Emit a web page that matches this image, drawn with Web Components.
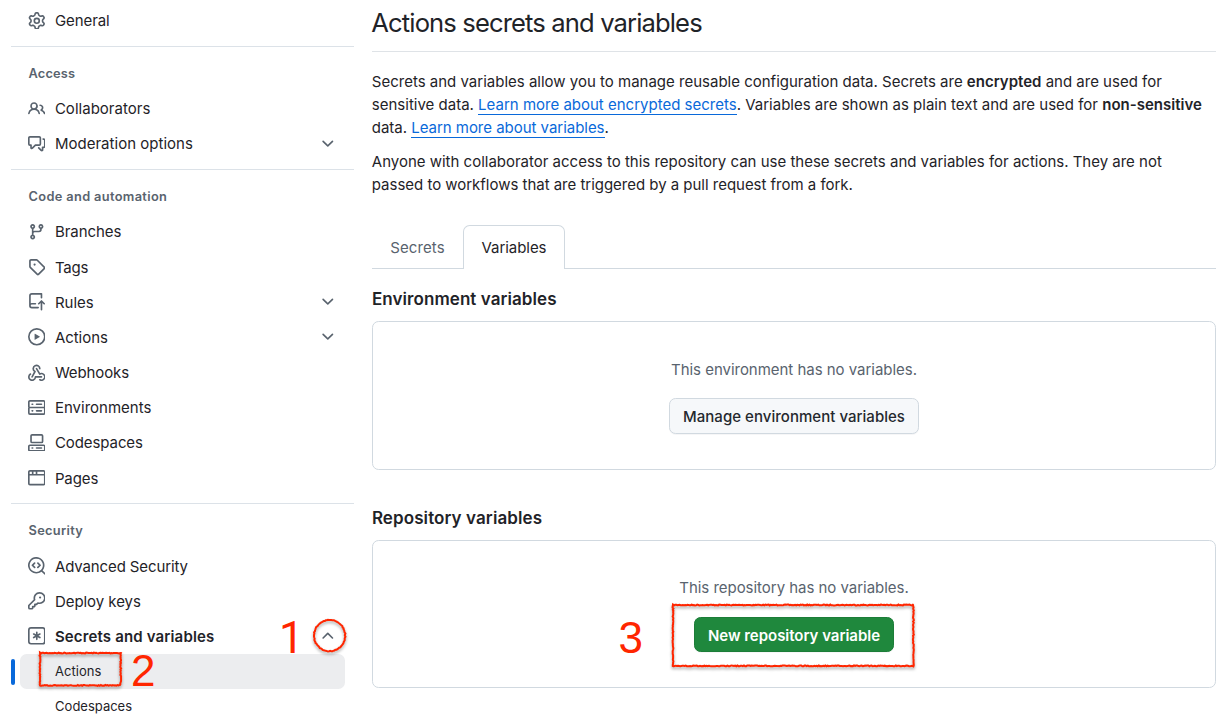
<!DOCTYPE html>
<html lang="en">
<head>
<meta charset="utf-8">
<title>Actions secrets and variables</title>
<style>
  body {
    margin: 0; width: 1230px; height: 723px; overflow: hidden; background: #fff; color: #1f2328;
    font-family: Inter, "Liberation Sans", sans-serif; font-size: 15px; line-height: 23px;
  }
  b { font-weight: 600; }
  a { color: #0969da; text-decoration: none; border-bottom: 1px solid #0969da; }
</style>
</head>
<body>
<settings-page>
  <side-nav slot="nav">
    <nav-item icon="gear" w="54.8">General</nav-item>
    <nav-divider></nav-divider>
    <nav-heading w="46.5">Access</nav-heading>
    <nav-item icon="people" w="95.5">Collaborators</nav-item>
    <nav-item icon="discussion" chevron="down" w="138">Moderation options</nav-item>
    <nav-divider></nav-divider>
    <nav-heading w="138.6">Code and automation</nav-heading>
    <nav-item icon="branch" w="66.5">Branches</nav-item>
    <nav-item icon="tag" w="33.2">Tags</nav-item>
    <nav-item icon="push" chevron="down" w="38.8">Rules</nav-item>
    <nav-item icon="play" chevron="down" w="53">Actions</nav-item>
    <nav-item icon="webhook" w="74.2">Webhooks</nav-item>
    <nav-item icon="server" w="96.5">Environments</nav-item>
    <nav-item icon="codespaces" w="88">Codespaces</nav-item>
    <nav-item icon="browser" w="43.3">Pages</nav-item>
    <nav-divider></nav-divider>
    <nav-heading w="54.5">Security</nav-heading>
    <nav-item icon="codescan" w="133">Advanced Security</nav-item>
    <nav-item icon="key" w="86">Deploy keys</nav-item>
    <nav-item icon="secret" chevron="up" strong w="159.5">Secrets and variables</nav-item>
    <nav-item sub current w="46.3">Actions</nav-item>
    <nav-item sub w="77">Codespaces</nav-item>
  </side-nav>

  <page-title w="330.5">Actions secrets and variables</page-title>
  <text-block>
    <fit-text w="790">Secrets and variables allow you to manage reusable configuration data. Secrets are <b>encrypted</b> and are used for</fit-text>
    <fit-text w="830">sensitive data. <a>Learn more about encrypted secrets</a>. Variables are shown as plain text and are used for <b>non-sensitive</b></fit-text>
    <fit-text w="237">data. <a>Learn more about variables</a>.</fit-text>
  </text-block>
  <text-block>
    <fit-text w="790">Anyone with collaborator access to this repository can use these secrets and variables for actions. They are not</fit-text>
    <fit-text w="481">passed to workflows that are triggered by a pull request from a fork.</fit-text>
  </text-block>
  <tab-strip>
    <tab-item w="54.5">Secrets</tab-item>
    <tab-item selected w="65">Variables</tab-item>
  </tab-strip>
  <section-title w="184.7">Environment variables</section-title>
  <blank-slate>
    <fit-text w="246">This environment has no variables.</fit-text>
    <ui-button slot="action" w="222">Manage environment variables</ui-button>
  </blank-slate>
  <section-title class="spaced" w="170.2">Repository variables</section-title>
  <blank-slate class="second">
    <fit-text w="229.5">This repository has no variables.</fit-text>
    <ui-button slot="action" primary w="172">New repository variable</ui-button>
  </blank-slate>

  <note-mark slot="notes" shape="circle" x="313.5" y="620.2" w="31.2" h="31.2"></note-mark>
  <note-mark slot="notes" shape="rect" x="39.9" y="653" w="80.7" h="32.4"></note-mark>
  <note-mark slot="notes" shape="rect" x="673.2" y="605.3" w="240.4" h="60.9"></note-mark>
  <note-digit slot="notes" style="left:279px;top:613px;font-family:Roboto,sans-serif">1</note-digit>
  <note-digit slot="notes" style="left:131px;top:646px">2</note-digit>
  <note-digit slot="notes" style="left:618.5px;top:613px">3</note-digit>
</settings-page>

<script>
const ICONS = {
  gear: 'M8 0a8.2 8.2 0 0 1 .701.031C9.444.095 9.99.645 10.16 1.29l.288 1.107c.018.066.079.158.212.224.231.114.454.243.668.386.123.082.233.09.299.071l1.103-.303c.644-.176 1.392.021 1.82.63.27.385.506.792.704 1.218.315.675.111 1.422-.364 1.891l-.814.806c-.049.048-.098.147-.088.294.016.257.016.515 0 .772-.01.147.038.246.088.294l.814.806c.475.469.679 1.216.364 1.891a7.977 7.977 0 0 1-.704 1.217c-.428.61-1.176.807-1.82.63l-1.102-.302c-.067-.019-.177-.011-.3.071a5.909 5.909 0 0 1-.668.386c-.133.066-.194.158-.211.224l-.29 1.106c-.168.646-.715 1.196-1.458 1.26a8.006 8.006 0 0 1-1.402 0c-.743-.064-1.289-.614-1.458-1.26l-.289-1.106c-.018-.066-.079-.158-.212-.224a5.738 5.738 0 0 1-.668-.386c-.123-.082-.233-.09-.299-.071l-1.103.303c-.644.176-1.392-.021-1.82-.63a8.12 8.12 0 0 1-.704-1.218c-.315-.675-.111-1.422.363-1.891l.815-.806c.05-.048.098-.147.088-.294a6.214 6.214 0 0 1 0-.772c.01-.147-.038-.246-.088-.294l-.815-.806C.635 6.045.431 5.298.746 4.623a7.92 7.92 0 0 1 .704-1.217c.428-.61 1.176-.807 1.82-.63l1.102.302c.067.019.177.011.3-.071.214-.143.437-.272.668-.386.133-.066.194-.158.211-.224l.29-1.106C6.009.645 6.556.095 7.299.03 7.53.01 7.764 0 8 0Zm-.571 1.525c-.036.003-.108.036-.137.146l-.289 1.105c-.147.561-.549.967-.998 1.189-.173.086-.34.183-.5.29-.417.278-.97.423-1.529.27l-1.103-.303c-.109-.03-.175.016-.195.045-.22.312-.412.644-.573.99-.014.031-.021.11.059.19l.815.806c.411.406.562.957.53 1.456a4.709 4.709 0 0 0 0 .582c.032.499-.119 1.05-.53 1.456l-.815.806c-.081.08-.073.159-.059.19.162.346.353.677.573.989.02.03.085.076.195.046l1.102-.303c.56-.153 1.113-.008 1.53.27.161.107.328.204.501.29.447.222.85.629.997 1.189l.289 1.105c.029.109.101.143.137.146a6.6 6.6 0 0 0 1.142 0c.036-.003.108-.036.137-.146l.289-1.105c.147-.561.549-.967.998-1.189.173-.086.34-.183.5-.29.417-.278.97-.423 1.529-.27l1.103.303c.109.029.175-.016.195-.045.22-.313.411-.644.573-.99.014-.031.021-.11-.059-.19l-.815-.806c-.411-.406-.562-.957-.53-1.456a4.709 4.709 0 0 0 0-.582c-.032-.499.119-1.05.53-1.456l.815-.806c.081-.08.073-.159.059-.19a6.464 6.464 0 0 0-.573-.989c-.02-.03-.085-.076-.195-.046l-1.102.303c-.56.153-1.113.008-1.53-.27a4.44 4.44 0 0 0-.501-.29c-.447-.222-.85-.629-.997-1.189l-.289-1.105c-.029-.11-.101-.143-.137-.146a6.6 6.6 0 0 0-1.142 0ZM11 8a3 3 0 1 1-6 0 3 3 0 0 1 6 0ZM9.5 8a1.5 1.5 0 1 0-3.001.001A1.5 1.5 0 0 0 9.5 8Z',
  people: 'M2 5.5a3.5 3.5 0 1 1 5.898 2.549 5.508 5.508 0 0 1 3.034 4.084.75.75 0 1 1-1.482.235 4 4 0 0 0-7.9 0 .75.75 0 0 1-1.482-.236A5.507 5.507 0 0 1 3.102 8.05 3.493 3.493 0 0 1 2 5.5ZM11 4a3.001 3.001 0 0 1 2.22 5.018 5.01 5.01 0 0 1 2.56 3.012.749.749 0 0 1-.885.954.752.752 0 0 1-.549-.514 3.507 3.507 0 0 0-2.522-2.372.75.75 0 0 1-.574-.73v-.352a.75.75 0 0 1 .416-.672A1.5 1.5 0 0 0 11 5.5.75.75 0 0 1 11 4Zm-5.5-.5a2 2 0 1 0-.001 3.999A2 2 0 0 0 5.5 3.5Z',
  discussion: 'M1.75 1h8.5c.966 0 1.75.784 1.75 1.75v5.5A1.75 1.75 0 0 1 10.25 10H7.061l-2.574 2.573A1.458 1.458 0 0 1 2 11.543V10h-.25A1.75 1.75 0 0 1 0 8.25v-5.5C0 1.784.784 1 1.75 1ZM1.5 2.75v5.5c0 .138.112.25.25.25h1a.75.75 0 0 1 .75.75v2.19l2.72-2.72a.749.749 0 0 1 .53-.22h3.5a.25.25 0 0 0 .25-.25v-5.5a.25.25 0 0 0-.25-.25h-8.5a.25.25 0 0 0-.25.25Zm13 2a.25.25 0 0 0-.25-.25h-.5a.75.75 0 0 1 0-1.5h.5c.966 0 1.75.784 1.75 1.75v5.5A1.75 1.75 0 0 1 14.25 12H14v1.543a1.458 1.458 0 0 1-2.487 1.03L9.22 12.28a.749.749 0 0 1 .326-1.275.749.749 0 0 1 .734.215l2.22 2.22v-2.19a.75.75 0 0 1 .75-.75h1a.25.25 0 0 0 .25-.25Z',
  branch: 'M9.5 3.25a2.25 2.25 0 1 1 3 2.122V6A2.5 2.5 0 0 1 10 8.5H6a1 1 0 0 0-1 1v1.128a2.251 2.251 0 1 1-1.5 0V5.372a2.25 2.25 0 1 1 1.5 0v1.836A2.493 2.493 0 0 1 6 7h4a1 1 0 0 0 1-1v-.628A2.25 2.25 0 0 1 9.5 3.25Zm-6 0a.75.75 0 1 0 1.5 0 .75.75 0 0 0-1.5 0Zm8.25-.75a.75.75 0 1 0 0 1.5.75.75 0 0 0 0-1.5ZM4.25 12a.75.75 0 1 0 0 1.5.75.75 0 0 0 0-1.5Z',
  tag: 'M1 7.775V2.75C1 1.784 1.784 1 2.75 1h5.025c.464 0 .91.184 1.238.513l6.25 6.25a1.75 1.75 0 0 1 0 2.474l-5.026 5.026a1.75 1.75 0 0 1-2.474 0l-6.25-6.25A1.752 1.752 0 0 1 1 7.775Zm1.5 0c0 .066.026.13.073.177l6.25 6.25a.25.25 0 0 0 .354 0l5.025-5.025a.25.25 0 0 0 0-.354l-6.25-6.25a.25.25 0 0 0-.177-.073H2.75a.25.25 0 0 0-.25.25ZM6 5a1 1 0 1 1 0 2 1 1 0 0 1 0-2Z',
  push: 'M1 2.5A2.5 2.5 0 0 1 3.5 0h8.75a.75.75 0 0 1 .75.75v3.5a.75.75 0 0 1-1.5 0V1.5h-8a1 1 0 0 0-1 1v6.708A2.493 2.493 0 0 1 3.5 9h3.25a.75.75 0 0 1 0 1.5H3.5a1 1 0 0 0 0 2h5.75a.75.75 0 0 1 0 1.5H3.5A2.5 2.5 0 0 1 1 11.5Zm13.23 7.79h-.001l-1.224-1.224v6.184a.75.75 0 0 1-1.5 0V9.066L10.28 10.29a.75.75 0 0 1-1.06-1.061l2.505-2.504a.75.75 0 0 1 1.06 0L15.29 9.23a.751.751 0 0 1-.018 1.042.751.751 0 0 1-1.042.018Z',
  play: 'M8 0a8 8 0 1 1 0 16A8 8 0 0 1 8 0ZM1.5 8a6.5 6.5 0 1 0 13 0 6.5 6.5 0 0 0-13 0Zm4.879-2.773 4.264 2.559a.25.25 0 0 1 0 .428l-4.264 2.559A.25.25 0 0 1 6 10.559V5.442a.25.25 0 0 1 .379-.215Z',
  webhook: 'M5.5 4.25a2.25 2.25 0 0 1 4.5 0 .75.75 0 0 0 1.5 0 3.75 3.75 0 1 0-6.14 2.889l-2.272 4.258a.75.75 0 0 0 1.324.706L7 7.25a.75.75 0 0 0-.309-1.015A2.25 2.25 0 0 1 5.5 4.25ZM7.364 3.607a.75.75 0 0 1 1.03.257l2.608 4.349a3.75 3.75 0 1 1-.628 6.785.75.75 0 0 1 .752-1.299 2.25 2.25 0 1 0-.033-3.88.75.75 0 0 1-1.03-.256L7.107 4.636a.75.75 0 0 1 .257-1.03ZM2.9 8.776A.75.75 0 0 1 2.625 9.8 2.25 2.25 0 1 0 6 11.75a.75.75 0 0 1 .75-.751h5.5a.75.75 0 0 1 0 1.5H7.425a3.751 3.751 0 1 1-5.55-3.998.75.75 0 0 1 1.024.274Z',
  server: 'M1.75 1h12.5c.966 0 1.75.784 1.75 1.75v4c0 .372-.116.717-.314 1 .198.283.314.628.314 1v4a1.75 1.75 0 0 1-1.75 1.75H1.75A1.75 1.75 0 0 1 0 12.75v-4c0-.358.109-.707.314-1a1.739 1.739 0 0 1-.314-1v-4C0 1.784.784 1 1.75 1ZM1.5 2.75v4c0 .138.112.25.25.25h12.5a.25.25 0 0 0 .25-.25v-4a.25.25 0 0 0-.25-.25H1.75a.25.25 0 0 0-.25.25Zm.25 5.75a.25.25 0 0 0-.25.25v4c0 .138.112.25.25.25h12.5a.25.25 0 0 0 .25-.25v-4a.25.25 0 0 0-.25-.25ZM7 4.75A.75.75 0 0 1 7.75 4h4.5a.75.75 0 0 1 0 1.5h-4.5A.75.75 0 0 1 7 4.75ZM7.75 10h4.5a.75.75 0 0 1 0 1.5h-4.5a.75.75 0 0 1 0-1.5ZM3 4.75A.75.75 0 0 1 3.75 4h.5a.75.75 0 0 1 0 1.5h-.5A.75.75 0 0 1 3 4.75ZM3.75 10h.5a.75.75 0 0 1 0 1.5h-.5a.75.75 0 0 1 0-1.5Z',
  codespaces: 'M0 11.25c0-.966.784-1.75 1.75-1.75h12.5c.966 0 1.75.784 1.75 1.75v3A1.75 1.75 0 0 1 14.25 16H1.75A1.75 1.75 0 0 1 0 14.25Zm2-9.5C2 .784 2.784 0 3.75 0h8.5C13.216 0 14 .784 14 1.75v5a1.75 1.75 0 0 1-1.75 1.75h-8.5A1.75 1.75 0 0 1 2 6.75Zm1.75-.25a.25.25 0 0 0-.25.25v5c0 .138.112.25.25.25h8.5a.25.25 0 0 0 .25-.25v-5a.25.25 0 0 0-.25-.25Zm-2 9.5a.25.25 0 0 0-.25.25v3c0 .138.112.25.25.25h12.5a.25.25 0 0 0 .25-.25v-3a.25.25 0 0 0-.25-.25ZM7 12.75a.75.75 0 0 1 .75-.75h4.5a.75.75 0 0 1 0 1.5h-4.5a.75.75 0 0 1-.75-.75Zm-4 0a.75.75 0 0 1 .75-.75h.5a.75.75 0 0 1 0 1.5h-.5a.75.75 0 0 1-.75-.75Z',
  browser: 'M0 2.75C0 1.784.784 1 1.75 1h12.5c.966 0 1.75.784 1.75 1.75v10.5A1.75 1.75 0 0 1 14.25 15H1.75A1.75 1.75 0 0 1 0 13.25ZM14.5 6h-13v7.25c0 .138.112.25.25.25h12.5a.25.25 0 0 0 .25-.25Zm-6-3.5v2h6V2.75a.25.25 0 0 0-.25-.25ZM5 2.5v2h2v-2Zm-3.25 0a.25.25 0 0 0-.25.25V4.5h2v-2Z',
  codescan: 'M8.47 4.97a.75.75 0 0 0 0 1.06L9.94 7.5 8.47 8.97a.75.75 0 1 0 1.06 1.06l2-2a.75.75 0 0 0 0-1.06l-2-2a.75.75 0 0 0-1.06 0ZM6.53 6.03a.75.75 0 0 0-1.06-1.06l-2 2a.75.75 0 0 0 0 1.06l2 2a.75.75 0 1 0 1.06-1.06L5.06 7.5l1.47-1.47ZM12.246 13.307a7.501 7.501 0 1 1 1.06-1.06l2.474 2.473a.75.75 0 1 1-1.06 1.06l-2.474-2.473ZM1.5 7.5a6.002 6.002 0 0 0 3.608 5.504 6.002 6.002 0 0 0 6.486-1.117.748.748 0 0 1 .292-.293A6 6 0 1 0 1.5 7.5Z',
  key: 'M10.5 0a5.499 5.499 0 1 1-1.288 10.848l-.932.932a.749.749 0 0 1-.53.22H7v.75a.749.749 0 0 1-.22.53l-.5.5a.749.749 0 0 1-.53.22H5v.75a.749.749 0 0 1-.22.53l-.5.5a.749.749 0 0 1-.53.22h-2A1.75 1.75 0 0 1 0 14.25v-2c0-.199.079-.389.22-.53l4.932-4.932A5.5 5.5 0 0 1 10.5 0Zm-4 5.5c-.001.431.069.86.205 1.269a.75.75 0 0 1-.181.768L1.5 12.56v1.69c0 .138.112.25.25.25h1.69l.06-.06v-1.19a.75.75 0 0 1 .75-.75h1.19l.06-.06v-1.19a.75.75 0 0 1 .75-.75h1.19l1.023-1.025a.75.75 0 0 1 .768-.18A4 4 0 1 0 6.5 5.5ZM11 6a1 1 0 1 1 0-2 1 1 0 0 1 0 2Z',
  secret: 'M0 2.75A2.75 2.75 0 0 1 2.75 0h10.5A2.75 2.75 0 0 1 16 2.75v10.5A2.75 2.75 0 0 1 13.25 16H2.75A2.75 2.75 0 0 1 0 13.25ZM2.75 1.5c-.69 0-1.25.56-1.25 1.25v10.5c0 .69.56 1.25 1.25 1.25h10.5c.69 0 1.25-.56 1.25-1.25V2.75c0-.69-.56-1.25-1.25-1.25ZM8 4a.75.75 0 0 1 .75.75V6.7l1.69-.975a.75.75 0 0 1 .75 1.3L9.5 8l1.69.976a.75.75 0 0 1-.75 1.298L8.75 9.3v1.951a.75.75 0 0 1-1.5 0V9.299l-1.69.976a.75.75 0 0 1-.75-1.3L6.5 8l-1.69-.975a.75.75 0 0 1 .75-1.3l1.69.976V4.75A.75.75 0 0 1 8 4Z',
  down: 'M12.78 5.22a.749.749 0 0 1 0 1.06l-4.25 4.25a.749.749 0 0 1-1.06 0L3.22 6.28a.749.749 0 1 1 1.06-1.06L8 8.939l3.72-3.719a.749.749 0 0 1 1.06 0Z',
  up: 'M3.22 10.53a.749.749 0 0 1 0-1.06l4.25-4.25a.749.749 0 0 1 1.06 0l4.25 4.25a.749.749 0 1 1-1.06 1.06L8 6.811 4.28 10.53a.749.749 0 0 1-1.06 0Z'
};

function define(name, render) {
  customElements.define(name, class extends HTMLElement {
    connectedCallback() {
      if (this.shadowRoot) return;
      this.attachShadow({ mode: 'open' }).innerHTML = render(this);
    }
  });
}
const attr = (el, n) => el.getAttribute(n) || '';

/* Tracks one line of text so that it fills the given width. */
define('fit-text', () => `
  <style>:host{display:block;width:max-content;white-space:nowrap}</style><slot></slot>`);
const track = el => {
  const w = parseFloat(attr(el, 'w'));
  const count = el.dataset.n ? +el.dataset.n : el.textContent.trim().length;
  el.style.letterSpacing = (w - el.getBoundingClientRect().width) / count + 'px';
};

define('ui-icon', el => `
  <style>:host{display:block;width:17.6px;height:17.6px;flex:none}svg{display:block;width:100%;height:100%;fill:currentColor}</style>
  <svg viewBox="0 0 16 16"><path fill-rule="evenodd" d="${ICONS[attr(el, 'name')]}"/></svg>`);

const line = el => `<fit-text w="${attr(el, 'w')}" data-n="${el.textContent.trim().length}"><slot></slot></fit-text>`;

define('settings-page', () => `
  <style>
    :host{display:grid;grid-template-columns:354px 844px;column-gap:18px;position:relative;height:723px}
    main{display:flex;flex-direction:column;min-width:0}
  </style>
  <slot name="nav"></slot><main><slot></slot></main><slot name="notes"></slot>`);

define('side-nav', () => `
  <style>:host{display:flex;flex-direction:column;padding:3.3px 0 0 11px}</style><slot></slot>`);
define('nav-divider', () => `
  <style>:host{display:block;height:1px;margin:7.3px 0 9.22px;background:#dce2e8;flex:none}</style>`);
define('nav-heading', el => `
  <style>:host{display:flex;align-items:center;height:35.2px;padding-left:17.6px;font-size:12.8px;font-weight:600;color:#59636e;flex:none}</style>
  ${line(el)}`);
define('nav-item', el => `
  <style>
    :host{display:flex;align-items:center;height:35.2px;flex:none}
    .bar{width:4px;height:26px;border-radius:3px;margin-right:5px}
    .row{display:flex;align-items:center;box-sizing:border-box;width:325px;height:100%;padding:0 8.6px 0 8px;border-radius:6.6px}
    ui-icon{color:#59636e} .lead{margin:0 9.4px .6px -.4px}
    fit-text{margin-left:.3px}
    .gap{width:17.6px;margin-right:9.2px}
    .end{margin:0 0 .6px auto}
    :host([strong]){font-weight:600}
    :host([sub]){font-size:13px}
    :host([current]) .bar{background:#0969da}
    :host([current]) .row{background:#ecedef}
  </style>
  <span class="bar"></span>
  <div class="row">
    ${attr(el, 'icon') ? `<ui-icon class="lead" name="${attr(el, 'icon')}"></ui-icon>` : '<span class="gap"></span>'}
    ${line(el)}
    ${attr(el, 'chevron') ? `<ui-icon class="end" name="${attr(el, 'chevron')}"></ui-icon>` : ''}
  </div>`);

define('page-title', el => `
  <style>:host{display:flex;align-items:center;height:51px;box-sizing:border-box;box-shadow:0 1px #dfe3e7;font-size:25.6px;line-height:40px;padding-bottom:5px;margin-bottom:19px;flex:none}fit-text{margin-left:-.7px}</style>
  ${line(el)}`);
define('text-block', () => `
  <style>:host{display:block;line-height:23.1px;margin:0 0 11px -.2px;flex:none}</style><slot></slot>`);
define('tab-strip', () => `
  <style>:host{display:flex;height:44px;margin-top:18px;box-shadow:inset 0 -1px #d1d9e0;flex:none}</style><slot></slot>`);
define('tab-item', el => `
  <style>
    :host{display:flex;align-items:center;justify-content:center;box-sizing:border-box;width:91px;color:#59636e}
    :host([selected]){width:102px;color:#1f2328;background:#fff;border:1px solid #d1d9e0;border-bottom:0;border-radius:6.6px 6.6px 0 0}
  </style>${line(el)}`);
define('section-title', el => `
  <style>:host{display:flex;align-items:center;height:30px;margin:15px 0 7px;font-size:17px;font-weight:600;flex:none}:host(.spaced){margin-top:33px}fit-text{margin-left:-.1px}</style>
  ${line(el)}`);
define('blank-slate', () => `
  <style>
    :host{display:flex;flex-direction:column;align-items:center;box-sizing:border-box;height:149px;padding-top:36px;border:1px solid #d1d9e0;border-radius:6.6px;color:#59636e;flex:none}
    :host(.second){height:148px;padding-top:35px}
    slot[name=action]{display:block;margin-top:17px}
    :host(.second) slot[name=action]{margin-top:18px}
  </style><slot></slot><slot name="action"></slot>`);
define('ui-button', el => `
  <style>
    :host{display:flex;align-items:center;justify-content:center;box-sizing:border-box;width:250px;height:36px;border:1px solid #d1d9e0;border-radius:6.6px;background:#f6f8fa;color:#25292e;font-weight:500;box-shadow:0 1px 0 rgba(31,35,40,.04)}
    fit-text{margin-top:1px}
    :host([primary]){width:200px;height:35px;background:#1f883d;border-color:#1c7d38;color:#fff;font-weight:600}
  </style>${line(el)}`);

/* Crayon-like outline: many short segments, each jittered by a seeded generator. */
function roughOutline(shape, w, h) {
  let seed = 7;
  const jitter = () => {
    seed = (seed * 16807) % 2147483647;
    return (seed / 2147483647 - .5) * .9;
  };
  const pts = [];
  if (shape === 'circle') {
    for (let i = 0; i < 90; i++) {
      const a = i / 90 * Math.PI * 2, r = w / 2 + jitter() * .8;
      pts.push([w / 2 + r * Math.cos(a), h / 2 + r * Math.sin(a)]);
    }
  } else {
    for (let x = 0; x < w; x += 1.1) pts.push([x, jitter()]);
    for (let y = 0; y < h; y += 1.1) pts.push([w + jitter(), y]);
    for (let x = w; x > 0; x -= 1.1) pts.push([x, h + jitter()]);
    for (let y = h; y > 0; y -= 1.1) pts.push([jitter(), y]);
  }
  return 'M' + pts.map(p => p[0].toFixed(2) + ' ' + p[1].toFixed(2)).join('L') + 'Z';
}
define('note-mark', el => {
  const w = +attr(el, 'w'), h = +attr(el, 'h');
  return `
  <style>
    :host{position:absolute;left:${attr(el, 'x')}px;top:${attr(el, 'y')}px;width:${w}px;height:${h}px}
    svg{display:block;overflow:visible;filter:drop-shadow(0 2px 1.5px rgba(0,0,0,.35))}
  </style>
  <svg width="${w}" height="${h}" fill="none" stroke="#ff2600" stroke-width="2">
    <path d="${roughOutline(attr(el, 'shape'), w, h)}"/>
  </svg>`;
});
define('note-digit', () => `
  <style>:host{position:absolute;font-family:"Liberation Sans",sans-serif;font-size:44px;line-height:50px;color:#ff2600}</style><slot></slot>`);

function trackAll(root) {
  root.querySelectorAll('*').forEach(el => {
    if (el.localName === 'fit-text') track(el);
    if (el.shadowRoot) trackAll(el.shadowRoot);
  });
}
trackAll(document);
</script>
</body>
</html>
